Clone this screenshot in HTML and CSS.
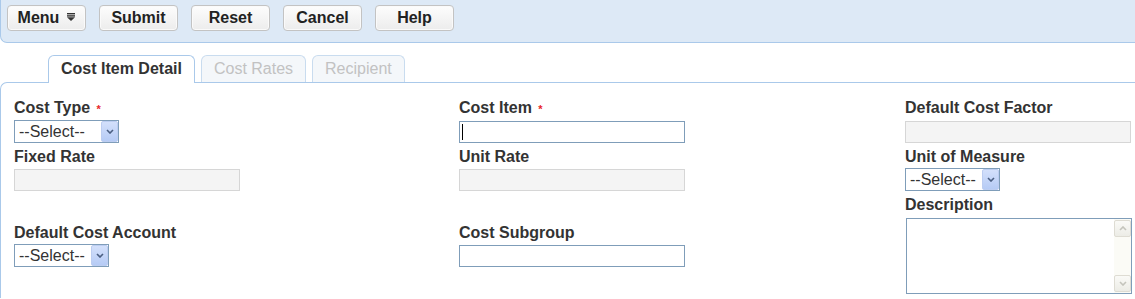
FILE: index.html
```html
<!DOCTYPE html>
<html lang="en">
<head>
    <meta charset="UTF-8">
    <meta name="viewport" content="width=device-width, initial-scale=1.0">
    <title>Cost Item Detail</title>
    <link rel="stylesheet" href="styles.css">
</head>
<body>
    <div class="toolbar">
        <button class="btn">Menu
            <svg class="menu-icon" width="8" height="8" viewBox="0 0 8 8">
                <rect x="0" y="0" width="8" height="1.4" fill="#333"/>
                <rect x="0" y="2.2" width="8" height="1.4" fill="#333"/>
                <polygon points="0,4.3 8,4.3 4,8" fill="#333"/>
            </svg>
        </button>
        <button class="btn">Submit</button>
        <button class="btn">Reset</button>
        <button class="btn">Cancel</button>
        <button class="btn">Help</button>
    </div>

    <div class="tabs">
        <div class="tab active">Cost Item Detail</div>
        <div class="tab">Cost Rates</div>
        <div class="tab">Recipient</div>
    </div>

    <div class="panel">
        <div class="form-grid">
            <!-- row 1 -->
            <div class="field first">
                <label>Cost Type <span class="req">*</span></label>
                <div class="select-box select-wide">
                    <select><option>--Select--</option></select>
                    <span class="arrow">
                        <svg width="8" height="5" viewBox="0 0 8 5"><path d="M1 1 L4 4 L7 1" fill="none" stroke="#4b5f82" stroke-width="1.6"/></svg>
                    </span>
                </div>
            </div>
            <div class="field first">
                <label>Cost Item <span class="req">*</span></label>
                <div class="input-wrap">
                    <input type="text" class="input">
                    <span class="caret"></span>
                </div>
            </div>
            <div class="field first">
                <label>Default Cost Factor</label>
                <input type="text" class="input" disabled>
            </div>

            <!-- row 2 -->
            <div class="field">
                <label>Fixed Rate</label>
                <input type="text" class="input" disabled>
            </div>
            <div class="field">
                <label>Unit Rate</label>
                <input type="text" class="input" disabled>
            </div>
            <div class="field">
                <label>Unit of Measure</label>
                <div class="select-box">
                    <select><option>--Select--</option></select>
                    <span class="arrow">
                        <svg width="8" height="5" viewBox="0 0 8 5"><path d="M1 1 L4 4 L7 1" fill="none" stroke="#4b5f82" stroke-width="1.6"/></svg>
                    </span>
                </div>
            </div>

            <!-- row 3 -->
            <div class="field mid">
                <label>Default Cost Account</label>
                <div class="select-box">
                    <select><option>--Select--</option></select>
                    <span class="arrow">
                        <svg width="8" height="5" viewBox="0 0 8 5"><path d="M1 1 L4 4 L7 1" fill="none" stroke="#4b5f82" stroke-width="1.6"/></svg>
                    </span>
                </div>
            </div>
            <div class="field mid">
                <label>Cost Subgroup</label>
                <input type="text" class="input">
            </div>
            <div class="field">
                <label>Description</label>
                <div class="textarea-box">
                    <textarea></textarea>
                    <div class="scrollbar">
                        <span class="sb-btn">
                            <svg width="8" height="5" viewBox="0 0 8 5"><path d="M1 4 L4 1 L7 4" fill="none" stroke="#c4c4bc" stroke-width="1.6"/></svg>
                        </span>
                        <span class="sb-btn">
                            <svg width="8" height="5" viewBox="0 0 8 5"><path d="M1 1 L4 4 L7 1" fill="none" stroke="#c4c4bc" stroke-width="1.6"/></svg>
                        </span>
                    </div>
                </div>
            </div>
        </div>
    </div>
</body>
</html>
```

FILE: styles.css
```css
body {
    margin: 0;
    font-family: 'Liberation Sans', Arial, sans-serif;
    color: #333;
    background: #fff;
    overflow: hidden;
}

.toolbar {
    height: 43px;
    box-sizing: border-box;
    display: flex;
    gap: 13px;
    padding: 5px 0 0 6px;
    background: #dde9f6;
    border-left: 1px solid #aac9ea;
    border-bottom: 1px solid #aac9ea;
    border-bottom-left-radius: 7px;
}

.btn {
    width: 79px;
    height: 26px;
    padding: 0;
    display: flex;
    align-items: center;
    justify-content: center;
    gap: 8px;
    font-family: inherit;
    font-size: 16px;
    font-weight: bold;
    color: #222;
    background: linear-gradient(#fdfdfd, #ececec);
    border: 1px solid #c3c3c3;
    border-radius: 4px;
    box-shadow: inset 0 0 0 1px #fafafa;
}

.menu-icon {
    margin-top: -2px;
}

.tabs {
    display: flex;
    align-items: flex-start;
    gap: 6px;
    margin-top: 12px;
    padding-left: 48px;
    height: 27px;
}

.tab {
    height: 27px;
    box-sizing: border-box;
    padding: 3px 12px 0;
    line-height: 20px;
    font-size: 16px;
    color: #c2c2c2;
    background: #f4f7fa;
    border: 1px solid #c9dcef;
    border-bottom: none;
    border-radius: 6px 6px 0 0;
}

.tab.active {
    height: 28px;
    position: relative;
    z-index: 1;
    font-weight: bold;
    color: #333;
    background: #fff;
    border-color: #aac9ea;
}

.panel {
    border-top: 1px solid #aac9ea;
    border-left: 1px solid #aac9ea;
    border-top-left-radius: 7px;
    padding: 15px 0 0 13px;
    height: 200px;
}

.form-grid {
    display: grid;
    grid-template-columns: 445px 446px 1fr;
    row-gap: 6px;
    align-items: start;
}

.field {
    display: flex;
    flex-direction: column;
    align-items: flex-start;
}

.field.mid {
    align-self: center;
}

.field label {
    display: block;
    font-size: 16px;
    font-weight: bold;
    line-height: 16px;
    margin-bottom: 3px;
    color: #333;
}

.field.first label {
    line-height: 19px;
}

.req {
    color: #e8262a;
    font-size: 11px;
    line-height: 11px;
    margin-left: 2px;
}

.input {
    width: 226px;
    height: 22px;
    box-sizing: border-box;
    margin: 1px 0 0;
    padding: 0 3px;
    border: 1px solid #7f9db9;
    font-family: inherit;
    font-size: 15px;
    background: #fff;
    outline: none;
}

.input:disabled {
    background: #f4f4f4;
    border-color: #d6d6d6;
}

.input-wrap {
    position: relative;
}

.caret {
    position: absolute;
    left: 3px;
    top: 4px;
    width: 1px;
    height: 16px;
    background: #000;
}

.select-box {
    position: relative;
    width: 95px;
    height: 23px;
}

.select-box.select-wide {
    width: 105px;
}

.select-box select {
    -webkit-appearance: none;
    appearance: none;
    width: 100%;
    height: 23px;
    box-sizing: border-box;
    margin: 0;
    padding: 0 0 0 4px;
    border: 1px solid #7f9db9;
    border-radius: 0;
    background: #fff;
    font-family: inherit;
    font-size: 16px;
    color: #333;
}

.arrow {
    position: absolute;
    top: 1px;
    right: 1px;
    width: 17px;
    height: 21px;
    box-sizing: border-box;
    display: flex;
    align-items: center;
    justify-content: center;
    background: linear-gradient(#d3e0fb, #b6cbf5);
    border: 1px solid #bccdf1;
    border-radius: 2px;
}

.textarea-box {
    display: flex;
    width: 226px;
    height: 76px;
    box-sizing: border-box;
    margin: 2px 0 0 1px;
    border: 1px solid #7f9db9;
    background: #fff;
}

.textarea-box textarea {
    flex: 1;
    border: none;
    resize: none;
    outline: none;
    padding: 2px;
    font-family: inherit;
}

.scrollbar {
    width: 17px;
    display: flex;
    flex-direction: column;
    justify-content: space-between;
    padding: 1px 0;
    background: #fbfbf6;
}

.sb-btn {
    height: 17px;
    box-sizing: border-box;
    display: flex;
    align-items: center;
    justify-content: center;
    background: linear-gradient(#fafaf7, #ecece6);
    border: 1px solid #dedcd3;
    border-radius: 2px;
}
```
